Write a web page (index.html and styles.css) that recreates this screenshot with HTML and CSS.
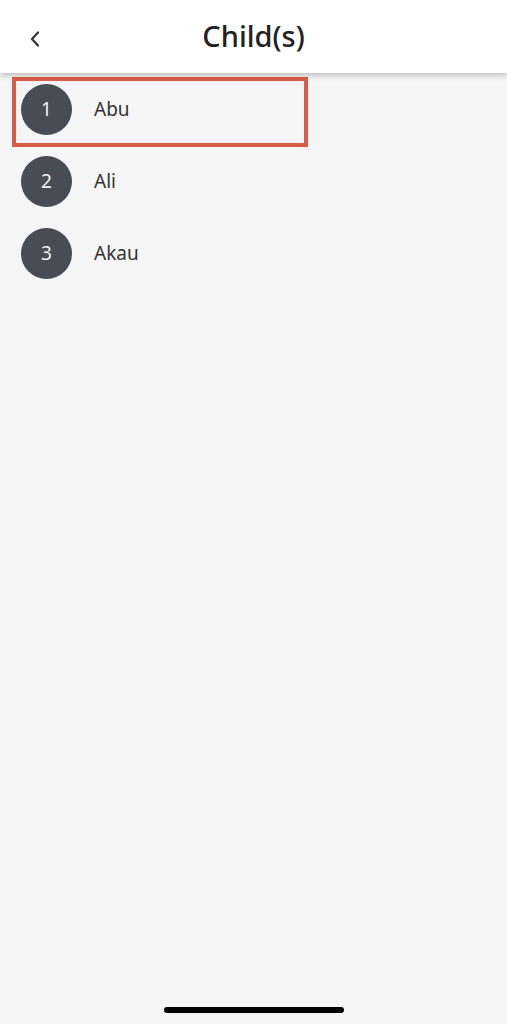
FILE: index.html
```html
<!DOCTYPE html>
<html>

<head>
    <title>Child(s)</title>
    <link rel="stylesheet" href="styles.css">
</head>

<body>
    <div id="app">
        <div class="header">
            <a class="back" href="#">
                <svg width="12" height="16" viewBox="0 0 12 16">
                    <path d="M9 1.5 L3 8 L9 14.5" fill="none" stroke="#333" stroke-width="2.2" stroke-linecap="round" stroke-linejoin="round" />
                </svg>
            </a>
            <h1>Child(s)</h1>
        </div>
        <ul class="children">
            <li class="child selected">
                <span class="num">1</span>
                <span class="name">Abu</span>
            </li>
            <li class="child">
                <span class="num">2</span>
                <span class="name">Ali</span>
            </li>
            <li class="child">
                <span class="num">3</span>
                <span class="name">Akau</span>
            </li>
        </ul>
        <div class="home-bar"></div>
    </div>
</body>

</html>
```

FILE: styles.css
```css
body {
    margin: 0;
    background-color: #f5f5f5;
    font-family: "Noto Sans", "Open Sans", sans-serif;
    color: #333;
}

#app {
    height: 1024px;
    display: flex;
    flex-direction: column;
}

.header {
    height: 73px;
    background-color: #fff;
    box-shadow: 0 2px 6px rgba(0, 0, 0, 0.25);
    display: flex;
    align-items: center;
    justify-content: center;
    position: relative;
}

.back {
    position: absolute;
    left: 29px;
    top: 30px;
    display: block;
    width: 12px;
    height: 16px;
}

h1 {
    margin: 0 0 2px 0;
    font-size: 29px;
    font-weight: 500;
    color: #222;
}

.children {
    list-style: none;
    margin: 0;
    padding: 4px 0 0 12px;
    flex: 1;
}

.child {
    width: 296px;
    height: 70px;
    box-sizing: border-box;
    border: 4px solid transparent;
    margin-bottom: 2px;
    display: flex;
    align-items: center;
    padding: 0 0 6px 5px;
}

.child.selected {
    border-color: #d95c49;
}

.num {
    width: 51px;
    height: 51px;
    border-radius: 50%;
    background-color: #474c55;
    color: #f2f2f2;
    font-size: 19px;
    display: flex;
    align-items: center;
    justify-content: center;
}

.name {
    margin-left: 22px;
    font-size: 19px;
    color: #333;
}

.home-bar {
    width: 180px;
    height: 6px;
    border-radius: 3px;
    background-color: #000;
    margin: 0 auto 11px auto;
}
```
